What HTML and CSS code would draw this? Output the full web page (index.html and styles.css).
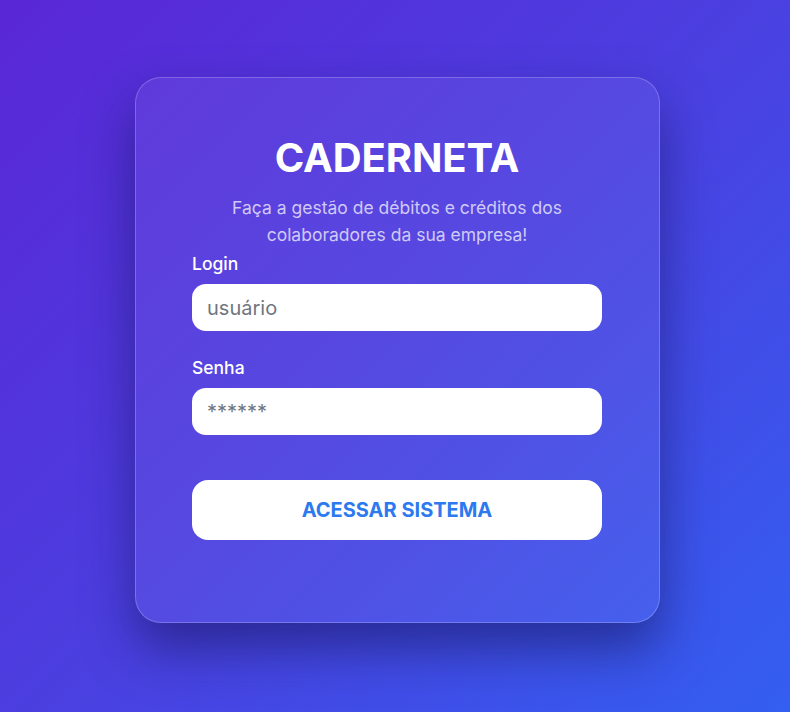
FILE: index.html
```html
<!DOCTYPE html>
<html lang="pt-BR">
<head>
<meta charset="utf-8">
<title>Caderneta</title>
<link rel="stylesheet" href="styles.css">
</head>
<body>
<main class="page">
  <section class="card">
    <h1 class="title">CADERNETA</h1>
    <p class="subtitle">Faça a gestão de débitos e créditos dos colaboradores da sua empresa!</p>
    <form class="form">
      <label class="label" for="login">Login</label>
      <input class="input" id="login" type="text" placeholder="usuário">
      <label class="label label-gap" for="senha">Senha</label>
      <input class="input" id="senha" type="password" placeholder="******">
      <button class="button" type="button">ACESSAR SISTEMA</button>
    </form>
  </section>
</main>
</body>
</html>
```
FILE: styles.css
```css
* { box-sizing: border-box; }
html, body { margin: 0; height: 100%; }
body {
  font-family: Inter, "Noto Sans", sans-serif;
  background: linear-gradient(135deg, #5a27d6 0%, #4b3fe0 50%, #335ff0 100%);
  overflow: hidden;
}
.page {
  height: 712px;
  display: flex;
  justify-content: center;
  align-items: flex-start;
  padding-top: 77px;
  padding-left: 5px;
}
.card {
  width: 525px;
  height: 546px;
  padding: 56px 57px 0 56px;
  border-radius: 26px;
  border: 1px solid rgba(255, 255, 255, 0.22);
  background: rgba(255, 255, 255, 0.06);
  box-shadow: 0 26px 50px rgba(20, 20, 90, 0.55);
  display: flex;
  flex-direction: column;
  align-items: stretch;
}
.title {
  margin: 0;
  text-align: center;
  color: #ffffff;
  font-size: 40px;
  font-weight: 700;
  line-height: 48px;
  letter-spacing: -0.1px;
}
.subtitle {
  margin: 12px 0 0;
  text-align: center;
  color: rgba(255, 255, 255, 0.72);
  font-size: 17.5px;
  line-height: 27px;
  padding: 0 10px;
}
.form {
  display: flex;
  flex-direction: column;
  margin-top: 5px;
}
.label {
  color: #ffffff;
  font-size: 17.5px;
  font-weight: 500;
  line-height: 21px;
  margin-bottom: 10px;
}
.label-gap { margin-top: 26px; }
.input {
  height: 47px;
  border: none;
  border-radius: 14px;
  background: #ffffff;
  padding: 0 15px;
  font-family: Inter, "Noto Sans", sans-serif;
  font-size: 20px;
  color: #333;
  outline: none;
}
.input::placeholder { color: #6f7680; }
.button {
  margin-top: 45px;
  height: 60px;
  border: none;
  border-radius: 16px;
  background: #ffffff;
  color: #2d7af0;
  font-family: Inter, "Noto Sans", sans-serif;
  font-size: 20px;
  font-weight: 700;
  cursor: pointer;
}
```
